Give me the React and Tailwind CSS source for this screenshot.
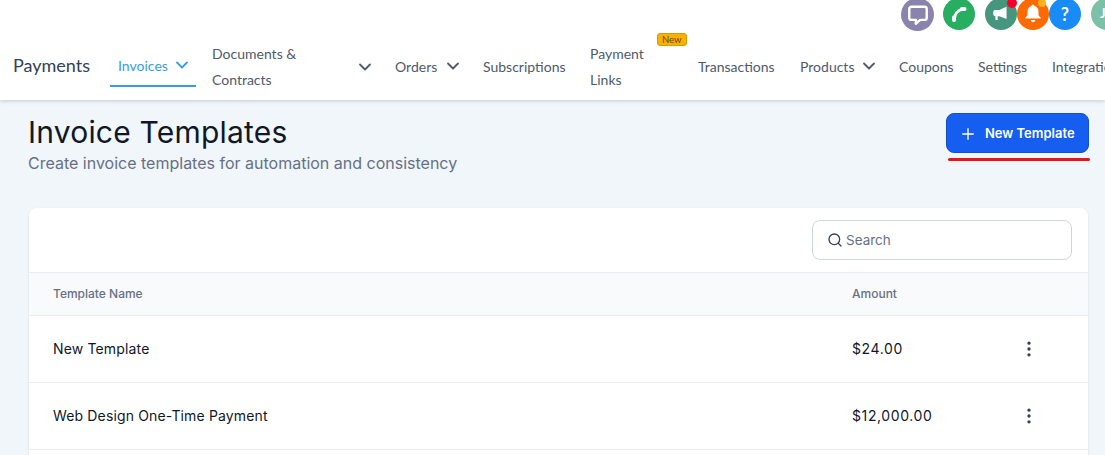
import React from "react";
import { ChevronDown, Plus, Search, MoreVertical } from "lucide-react";

const navFont = { fontFamily: "Lato, sans-serif" };

const NavItem = ({ children, chevron, active, className = "" }) => (
  <div
    className={`flex h-[40px] shrink-0 items-center justify-between px-2 text-[14px] ${
      active ? "text-[#37a0dc]" : "text-[#4f5a6b]"
    } ${className}`}
  >
    <span>{children}</span>
    {chevron && <ChevronDown size={20} strokeWidth={2.2} className="-mr-[4px] shrink-0" />}
  </div>
);

const TopIcon = ({ color, className = "", children }) => (
  <div
    className={`relative flex h-[32px] w-[32px] shrink-0 items-center justify-center rounded-full ${color} ${className}`}
  >
    {children}
  </div>
);

const rows = [
  { name: "New Template", amount: "$24.00" },
  { name: "Web Design One-Time Payment", amount: "$12,000.00" },
];

export default function App() {
  return (
    <div
      className="h-[455px] w-[1105px] overflow-hidden bg-[#f1f6fa]"
      style={{ fontFamily: "Inter, sans-serif" }}
    >
      {/* Top bar */}
      <header
        className="relative z-10 flex h-[100px] flex-col bg-white shadow-[0_1px_4px_rgba(16,24,40,0.2)]"
        style={navFont}
      >
        <div className="-mt-[2px] flex pl-[901px]">
          <TopIcon color="bg-[#8a83ad]" className="h-[33px] w-[33px]">
            <svg width="24" height="24" viewBox="0 0 22 22" fill="none">
              <path
                d="M5 3.5h12a2 2 0 0 1 2 2v8a2 2 0 0 1-2 2h-4l-4 3.500v-3.500H5a2 2 0 0 1-2-2v-8a2 2 0 0 1 2-2z"
                stroke="white"
                strokeWidth="2.2"
                strokeLinejoin="round"
              />
            </svg>
          </TopIcon>
          <TopIcon color="bg-[#27ae60]" className="ml-[9px]">
            <svg width="20" height="20" viewBox="0 0 20 20" fill="none" stroke="white" strokeLinecap="round">
              <path d="M5.500 15C5.500 10 9 6 14 5" strokeWidth="3" />
              <path d="M5 13.500v2.500" strokeWidth="4" />
              <path d="M13 5h2.500" strokeWidth="4" />
            </svg>
          </TopIcon>
          <TopIcon color="bg-[#45967c]" className="ml-[10px]">
            <svg width="20" height="20" viewBox="0 0 18 18" fill="white">
              <path d="M14 2.500v11L7.500 11H6v3.500H4V11c-1.200 0-2-.8-2-2V7.500c0-1.200.8-2 2-2h3.500z" />
            </svg>
            <span className="absolute right-0 top-0 h-[10px] w-[10px] rounded-full bg-[#f5002d]" />
          </TopIcon>
          <TopIcon color="bg-[#ff6a00]">
            <svg width="22" height="22" viewBox="0 0 20 20" fill="white">
              <path d="M10 1.500c.8 0 1.300.5 1.400 1.200 2.300.6 3.600 2.500 3.600 5v3.500l2 2.300v.5H3v-.5l2-2.300V7.700c0-2.500 1.300-4.400 3.600-5 .1-.7.6-1.200 1.400-1.200z" />
              <path d="M8 15.500h4c0 1.200-.9 2-2 2s-2-.8-2-2z" />
            </svg>
            <span className="absolute right-[3px] top-[1px] h-[8px] w-[8px] rounded-full bg-[#ffb020]" />
          </TopIcon>
          <TopIcon color="bg-[#188bf6]" className="text-[18px] font-bold text-white">
            ?
          </TopIcon>
          <TopIcon
            color="bg-[#7cc0a8]"
            className="ml-[10px] justify-start pl-[9px] text-[13px] font-bold text-white"
          >
            J
          </TopIcon>
        </div>

        <nav className="mt-[15px] flex h-[40px] items-center pl-[13px]">
          <span className="mr-[20px] shrink-0 pb-[1px] text-[18px] text-[#344054]">Payments</span>
          <div className="flex gap-2">
            <div className="relative">
              <NavItem chevron active className="w-[86px] pb-[2px]">
                Invoices
              </NavItem>
              <span className="absolute inset-x-0 -bottom-[1px] h-[2px] bg-[#37a0dc]" />
            </div>
            <NavItem chevron className="w-[175px] pt-[1px]">
              <span className="block w-[110px] leading-[26px]">Documents &amp; Contracts</span>
            </NavItem>
            <NavItem chevron className="w-[80px]">Orders</NavItem>
            <NavItem className="w-[99px]">Subscriptions</NavItem>
            <div className="relative">
              <NavItem className="w-[100px] pt-[1px]">
                <span className="block w-[70px] leading-[26px]">Payment Links</span>
              </NavItem>
              <span className="absolute -top-[13px] left-[75px] rounded-[3px] border border-[#d99a00] bg-[#fbb000] px-[4px] text-[9.5px] leading-[11px] text-[#5f4a10]">
                New
              </span>
            </div>
            <NavItem className="w-[94px]">Transactions</NavItem>
            <NavItem chevron className="w-[91px]">Products</NavItem>
            <NavItem className="w-[71px]">Coupons</NavItem>
            <NavItem className="w-[66px]">Settings</NavItem>
            <NavItem>Integrations</NavItem>
          </div>
        </nav>
      </header>

      <main className="pl-[28px] pr-[16px]">
        {/* Page title */}
        <div className="relative flex items-start justify-between pt-[13px]">
          <div>
            <h1 className="text-[30px] leading-[38px] font-normal tracking-[0.2px] text-[#101828]">
              Invoice Templates
            </h1>
            <p className="text-[16px] leading-[24px] text-[#667085]">
              Create invoice templates for automation and consistency
            </p>
          </div>
          <button className="flex h-[40px] w-[143px] items-center gap-[8px] rounded-[8px] border border-[#0f4fd0] bg-[#155eef] pl-[12px] pt-[1px] text-[13px] font-semibold text-white">
            <Plus size={18} strokeWidth={1.8} />
            New Template
          </button>
          <span className="absolute -right-[1px] top-[58px] h-[3px] w-[142px] rounded-full bg-[#e8141c]" />
        </div>

        {/* Table card */}
        <section className="mt-[33px] ml-[1px] w-[1059px] rounded-t-[8px] bg-white shadow-[0_1px_3px_rgba(16,24,40,0.1)]">
          <div className="flex h-[65px] items-center justify-end border-b border-[#eaecf0] pr-[16px]">
            <div className="flex h-[40px] w-[260px] items-center gap-[3px] rounded-[8px] border border-[#d0d5dd] px-[14px] text-[13.5px] text-[#667085]">
              <Search size={16} strokeWidth={2} className="text-[#344054]" />
              Search
            </div>
          </div>
          <div className="flex h-[43px] items-center border-b border-[#eaecf0] bg-[#f9fafb] pl-[24px] text-[12px] font-medium text-[#667085]">
            <span className="w-[799px]">Template Name</span>
            <span>Amount</span>
          </div>
          {rows.map((row) => (
            <div
              key={row.name}
              className="flex h-[67px] items-center border-b border-[#eaecf0] pl-[24px] text-[14px] text-[#101828]"
            >
              <span className="w-[799px] pb-[1px] tracking-[0.15px]">{row.name}</span>
              <span className="w-[167px] pb-[1px] tracking-[0.6px]">{row.amount}</span>
              <MoreVertical size={20} strokeWidth={2} className="text-[#344054]" />
            </div>
          ))}
          <div className="h-[67px]" />
        </section>
      </main>
    </div>
  );
}
